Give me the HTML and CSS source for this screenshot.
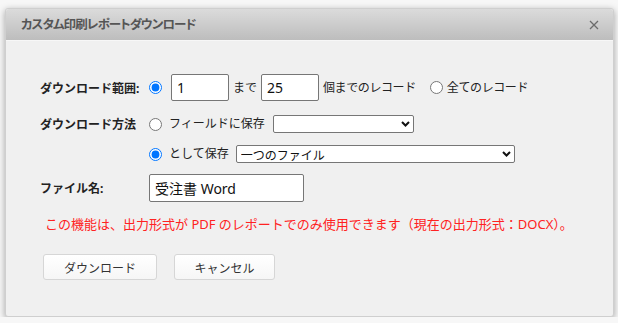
FILE: index.html
```html
<!DOCTYPE html>
<html lang="ja">
<head>
  <meta charset="UTF-8">
  <title>カスタム印刷レポートダウンロード</title>
  <link rel="stylesheet" href="styles.css">
</head>
<body>
  <div class="dialog">
    <header class="title-bar">
      <span class="title">カスタム印刷レポートダウンロード</span>
      <button class="close-btn" aria-label="閉じる">
        <svg width="10" height="10" viewBox="0 0 10 10"><path d="M1 1 L9 9 M9 1 L1 9" stroke="#6b6b6b" stroke-width="1.3" fill="none"/></svg>
      </button>
    </header>

    <div class="dialog-body">
      <div class="form-row row-range">
        <span class="label">ダウンロード範囲:</span>
        <input type="radio" name="range" checked>
        <input type="text" class="num-input first" value="1">
        <span class="text">まで</span>
        <input type="text" class="num-input" value="25">
        <span class="text narrow">個までのレコード</span>
        <input type="radio" name="range" class="radio-all">
        <span class="text narrow">全てのレコード</span>
      </div>

      <div class="form-row row-method">
        <span class="label">ダウンロード方法</span>
        <input type="radio" name="method">
        <span class="text">フィールドに保存</span>
        <span class="select-wrap field-select">
          <select></select>
          <svg class="chevron" width="9" height="6" viewBox="0 0 9 6"><path d="M1 1 L4.5 4.5 L8 1" stroke="#111" stroke-width="2" fill="none"/></svg>
        </span>
      </div>

      <div class="form-row row-save">
        <span class="label"></span>
        <input type="radio" name="method" checked>
        <span class="text">として保存</span>
        <span class="select-wrap file-select">
          <select><option>一つのファイル</option></select>
          <svg class="chevron" width="9" height="6" viewBox="0 0 9 6"><path d="M1 1 L4.5 4.5 L8 1" stroke="#111" stroke-width="2" fill="none"/></svg>
        </span>
      </div>

      <div class="form-row row-name">
        <span class="label">ファイル名:</span>
        <input type="text" class="name-input" value="受注書 Word">
      </div>

      <p class="warning">この機能は、出力形式が PDF のレポートでのみ使用できます（現在の出力形式：DOCX）。</p>

      <div class="actions">
        <button class="btn btn-download">ダウンロード</button>
        <button class="btn btn-cancel">キャンセル</button>
      </div>
    </div>
  </div>
</body>
</html>
```

FILE: styles.css
```css
/* General */
body {
  margin: 0;
  background-color: #f7f7f7;
  font-family: "Noto Sans", "Noto Sans CJK JP", sans-serif;
  color: #222;
}

.dialog {
  width: 609px;
  height: 309px;
  margin: 8px 0 0 5px;
  box-sizing: border-box;
  background-color: #f0f0f0;
  border: 1px solid #cfcfcf;
  border-radius: 3px;
  box-shadow: 0 2px 7px rgba(0, 0, 0, 0.35);
}

/* Title bar */
.title-bar {
  height: 31px;
  display: flex;
  align-items: center;
  justify-content: space-between;
  padding: 0 14px 0 15px;
  background: linear-gradient(#dbdbdb, #bdbdbd);
  border-bottom: 1px solid #f7f7f7;
  border-radius: 3px 3px 0 0;
}

.title {
  font-family: "Noto Sans CJK JP", sans-serif;
  font-size: 12.5px;
  font-weight: bold;
  color: #555;
  font-feature-settings: "palt";
  letter-spacing: -0.9px;
  line-height: 1;
}

.close-btn {
  border: none;
  background: transparent;
  padding: 0;
  width: 10px;
  height: 10px;
  display: flex;
}

/* Body */
.dialog-body {
  padding: 33px 0 0 34px;
  font-size: 12px;
}

.form-row {
  display: flex;
  align-items: center;
}

.label {
  width: 109px;
  flex-shrink: 0;
  font-weight: bold;
  font-size: 12px;
  color: #222;
}

.form-row input[type="radio"] {
  margin: 0;
  width: 13px;
  height: 13px;
}

.text {
  line-height: 1;
  color: #222;
}

.text.narrow {
  letter-spacing: -0.4px;
}

.row-range {
  height: 27px;
}

.num-input {
  width: 58px;
  height: 27px;
  box-sizing: border-box;
  border: 1px solid #767676;
  border-radius: 2px;
  padding: 0 5px;
  font-family: "Noto Sans", "Noto Sans CJK JP", sans-serif;
  font-size: 14px;
  color: #111;
  margin: 0 4px 0 4px;
}

.num-input.first {
  margin-left: 9px;
}

.radio-all {
  margin-left: 14px !important;
  margin-right: 4px !important;
}

.row-method {
  height: 18px;
  margin-top: 14px;
}

.row-method .text,
.row-save .text {
  margin-left: 7px;
}

.select-wrap {
  position: relative;
  display: inline-block;
}

.select-wrap select {
  appearance: none;
  -webkit-appearance: none;
  height: 18px;
  box-sizing: border-box;
  border: 1px solid #767676;
  border-radius: 2px;
  background-color: #fff;
  padding: 0 4px;
  font-family: "Noto Sans CJK JP", sans-serif;
  font-size: 12px;
  color: #111;
  display: block;
}

.field-select {
  margin-left: 8px;
}

.field-select select {
  width: 141px;
}

.file-select {
  margin-left: 7px;
}

.file-select select {
  width: 279px;
}

.chevron {
  position: absolute;
  right: 4px;
  top: 6px;
  pointer-events: none;
}

.row-save {
  height: 18px;
  margin-top: 12px;
}

.row-name {
  height: 28px;
  margin-top: 11px;
}

.name-input {
  width: 155px;
  height: 28px;
  box-sizing: border-box;
  border: 1px solid #767676;
  border-radius: 2px;
  padding: 0 5px;
  font-family: "Noto Sans", "Noto Sans CJK JP", sans-serif;
  font-size: 14px;
  color: #111;
}

.warning {
  margin: 13px 0 0 5px;
  font-size: 13px;
  line-height: 18px;
  color: #f22;
}

/* Buttons */
.actions {
  display: flex;
  gap: 17px;
  margin: 21px 0 0 3px;
}

.btn {
  height: 26px;
  border: 1px solid #d6d6d6;
  border-radius: 3px;
  background: linear-gradient(#ffffff, #f6f6f6);
  font-family: "Noto Sans CJK JP", sans-serif;
  font-size: 12px;
  color: #333;
  padding: 0;
}

.btn-download {
  width: 114px;
}

.btn-cancel {
  width: 101px;
}
```
